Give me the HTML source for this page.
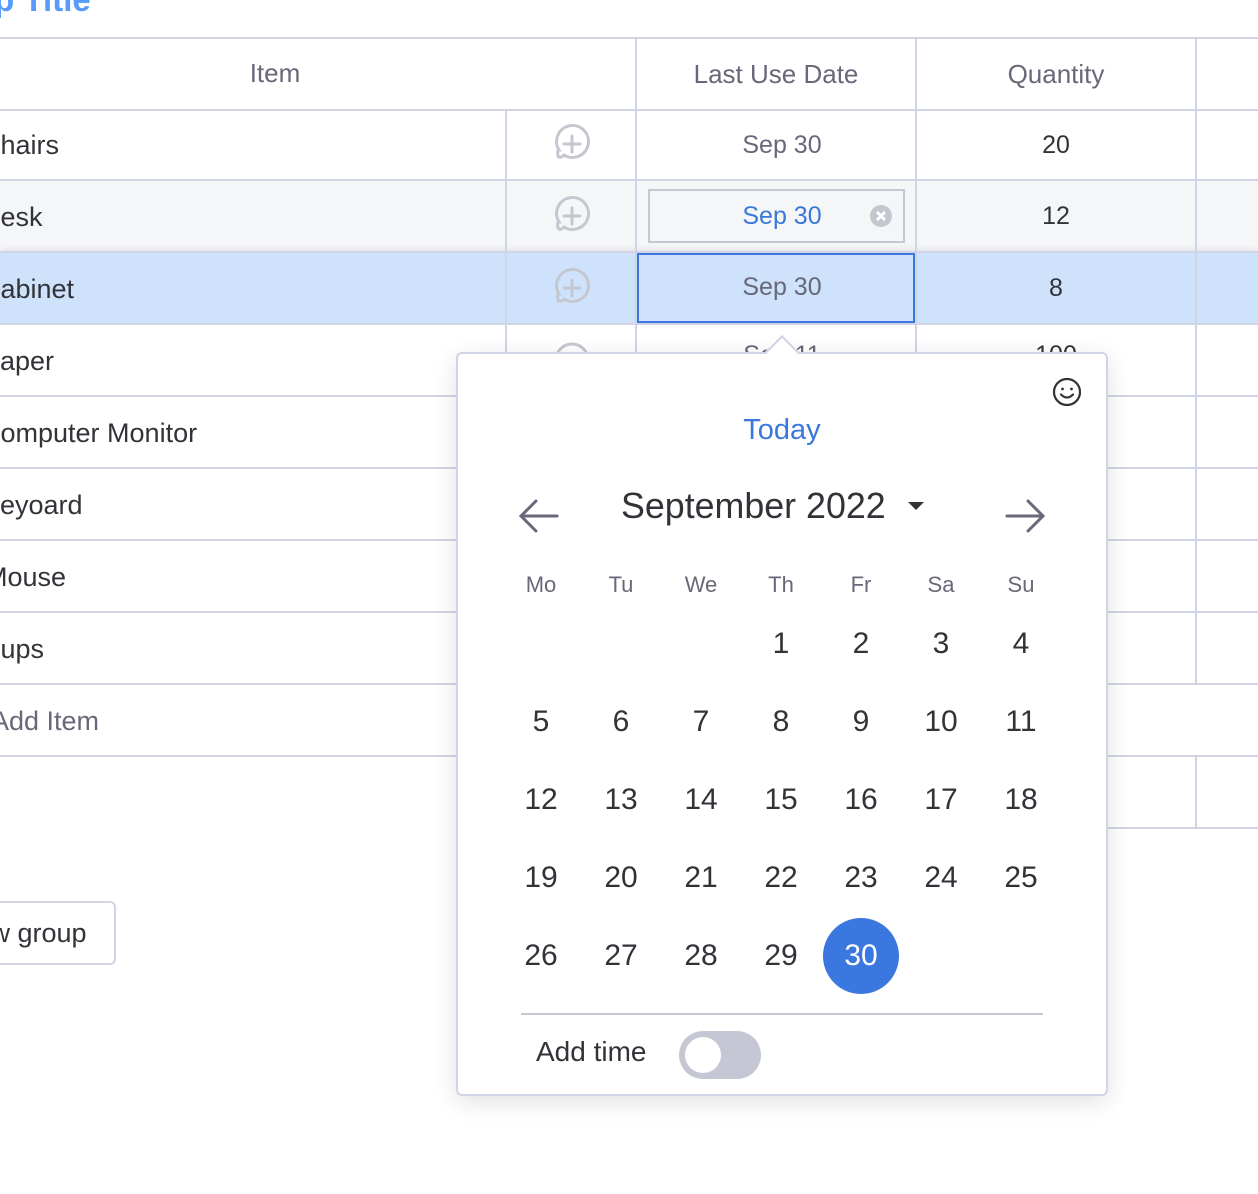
<!DOCTYPE html>
<html><head><meta charset="utf-8"><style>
*{margin:0;padding:0;box-sizing:border-box}
body{width:1258px;height:1194px;overflow:hidden;background:#fff;font-family:"Liberation Sans",sans-serif;position:relative;color:#323338}
.a{position:absolute}
.h{position:absolute;height:2px;background:#d0d4e4}
.v{position:absolute;width:2px;background:#d0d4e4}
.t{position:absolute;font-size:27px;line-height:30px;white-space:nowrap}
.c{position:absolute;text-align:center;font-size:25px;line-height:30px}
.d{position:absolute;width:60px;text-align:center;font-size:30px;font-weight:300;line-height:36px;color:#323338}
.w{position:absolute;width:60px;text-align:center;font-size:22px;line-height:26px;color:#676879}
</style></head><body>
<div class="a" style="left:-26px;top:-19px;font-size:33px;font-weight:bold;color:#579bfc">up Title</div>
<div class="a" style="left:0;top:181px;width:1258px;height:71px;background:#f5f6f8"></div>
<div class="a" style="left:0;top:252px;width:1258px;height:72px;background:#cfe2fb;box-shadow:0 -4px 6px rgba(0,0,0,0.06)"></div>
<div class="h" style="left:0;top:37px;width:1258px"></div>
<div class="h" style="left:0;top:109px;width:1258px"></div>
<div class="h" style="left:0;top:179px;width:1258px"></div>
<div class="h" style="left:0;top:251px;width:1258px"></div>
<div class="h" style="left:0;top:323px;width:1258px"></div>
<div class="h" style="left:0;top:395px;width:1258px"></div>
<div class="h" style="left:0;top:467px;width:1258px"></div>
<div class="h" style="left:0;top:539px;width:1258px"></div>
<div class="h" style="left:0;top:611px;width:1258px"></div>
<div class="h" style="left:0;top:683px;width:1258px"></div>
<div class="h" style="left:0;top:755px;width:1258px"></div>
<div class="h" style="left:1100px;top:827px;width:158px"></div>
<div class="v" style="left:505px;top:110px;height:574px"></div>
<div class="v" style="left:635px;top:38px;height:646px"></div>
<div class="v" style="left:915px;top:38px;height:646px"></div>
<div class="v" style="left:1195px;top:38px;height:646px"></div>
<div class="v" style="left:1195px;top:756px;height:72px"></div>
<div class="c" style="left:0;top:58px;width:550px;font-size:26px;color:#676879">Item</div>
<div class="c" style="left:636px;top:59px;width:280px;font-size:26px;color:#676879">Last Use Date</div>
<div class="c" style="left:916px;top:59px;width:280px;font-size:26px;color:#676879">Quantity</div>
<div class="t" style="left:-19px;top:130px">Chairs</div>
<div class="t" style="left:-19px;top:202px">Desk</div>
<div class="t" style="left:-19px;top:274px">Cabinet</div>
<div class="t" style="left:-18px;top:346px">Paper</div>
<div class="t" style="left:-19px;top:418px">Computer Monitor</div>
<div class="t" style="left:-18px;top:490px">Keyoard</div>
<div class="t" style="left:-15px;top:562px">Mouse</div>
<div class="t" style="left:-19px;top:634px">Cups</div>
<div class="t" style="left:-9px;top:706px;color:#676879">Add Item</div>
<svg class="a" style="left:550px;top:122px" width="44" height="290" viewBox="0 0 44 290" fill="none" stroke="#c5c7d0" stroke-width="3" stroke-linecap="round">
<g><path d="M8 34 Q7 28 9 28 A16 16 0 1 1 14 33 Q10 37 8 34Z"/><path d="M22 14v16M14 22h16"/></g>
<g transform="translate(0,72)"><path d="M8 34 Q7 28 9 28 A16 16 0 1 1 14 33 Q10 37 8 34Z"/><path d="M22 14v16M14 22h16"/></g>
<g transform="translate(0,144)"><path d="M8 34 Q7 28 9 28 A16 16 0 1 1 14 33 Q10 37 8 34Z"/><path d="M22 14v16M14 22h16"/></g>
<g transform="translate(0,216)"><circle cx="22" cy="22" r="16"/></g>
</svg>
<div class="c" style="left:642px;top:130px;width:280px;color:#676879">Sep 30</div>
<div class="a" style="left:648px;top:189px;width:257px;height:54px;border:2px solid #c5c7d4;background:#f5f6f8"></div>
<div class="c" style="left:642px;top:201px;width:280px;color:#3a78d8">Sep 30</div>
<svg class="a" style="left:869px;top:204px" width="24" height="24"><circle cx="12" cy="12" r="11" fill="#c5c7d0"/><path d="M8 8l8 8M16 8l-8 8" stroke="#fff" stroke-width="3"/></svg>
<div class="a" style="left:637px;top:253px;width:278px;height:70px;border:2px solid #3a78e0"></div>
<div class="c" style="left:642px;top:272px;width:280px;color:#676879">Sep 30</div>
<div class="c" style="left:916px;top:130px;width:280px;color:#323338">20</div>
<div class="c" style="left:916px;top:201px;width:280px;color:#323338">12</div>
<div class="c" style="left:916px;top:273px;width:280px;color:#323338">8</div>
<div class="c" style="left:642px;top:340px;width:280px;color:#676879">Sep 11</div>
<div class="c" style="left:916px;top:340px;width:280px;color:#323338">100</div>
<div class="a" style="left:-20px;top:901px;width:136px;height:64px;border:2px solid #d0d4e4;border-radius:6px;background:#fff"></div>
<div class="t" style="left:-44px;top:918px">New group</div>
<div class="a" style="left:456px;top:352px;width:652px;height:744px;background:#fff;border:2px solid #d0d4e4;border-radius:6px;box-shadow:0 6px 24px rgba(0,0,0,0.12)"></div>
<div class="a" style="left:770px;top:340px;width:24px;height:24px;background:#fff;border-left:2px solid #d0d4e4;border-top:2px solid #d0d4e4;transform:rotate(45deg)"></div>
<svg class="a" style="left:1052px;top:377px" width="30" height="30" fill="none" stroke="#323338" stroke-width="2.2"><circle cx="15" cy="15" r="13"/><circle cx="10.5" cy="12" r="1.4" fill="#323338" stroke="none"/><circle cx="19.5" cy="12" r="1.4" fill="#323338" stroke="none"/><path d="M9 17.5q6 6 12 0" stroke-linecap="round"/></svg>
<div class="a" style="left:456px;top:412px;width:652px;text-align:center;font-size:29px;line-height:36px;color:#3a78e0">Today</div>
<svg class="a" style="left:518px;top:497px" width="42" height="38" fill="none" stroke="#676879" stroke-width="3" stroke-linecap="round"><path d="M39 19H4M18 4L3 19l15 15"/></svg>
<svg class="a" style="left:1004px;top:497px" width="42" height="38" fill="none" stroke="#676879" stroke-width="3" stroke-linecap="round"><path d="M3 19h35M24 4l15 15-15 15"/></svg>
<div class="a" style="left:621px;top:485px;font-size:35.8px;line-height:42px;color:#323338;white-space:nowrap">September 2022</div>
<div class="a" style="left:908px;top:502px;width:0;height:0;border-left:8px solid transparent;border-right:8px solid transparent;border-top:8px solid #323338"></div>
<div class="w" style="left:511px;top:572px">Mo</div>
<div class="w" style="left:591px;top:572px">Tu</div>
<div class="w" style="left:671px;top:572px">We</div>
<div class="w" style="left:751px;top:572px">Th</div>
<div class="w" style="left:831px;top:572px">Fr</div>
<div class="w" style="left:911px;top:572px">Sa</div>
<div class="w" style="left:991px;top:572px">Su</div>
<div class="a" style="left:823px;top:918px;width:76px;height:76px;border-radius:50%;background:#3a78e0"></div>
<div class="d" style="left:751px;top:626px">1</div><div class="d" style="left:831px;top:626px">2</div><div class="d" style="left:911px;top:626px">3</div><div class="d" style="left:991px;top:626px">4</div>
<div class="d" style="left:511px;top:704px">5</div><div class="d" style="left:591px;top:704px">6</div><div class="d" style="left:671px;top:704px">7</div><div class="d" style="left:751px;top:704px">8</div><div class="d" style="left:831px;top:704px">9</div><div class="d" style="left:911px;top:704px">10</div><div class="d" style="left:991px;top:704px">11</div>
<div class="d" style="left:511px;top:782px">12</div><div class="d" style="left:591px;top:782px">13</div><div class="d" style="left:671px;top:782px">14</div><div class="d" style="left:751px;top:782px">15</div><div class="d" style="left:831px;top:782px">16</div><div class="d" style="left:911px;top:782px">17</div><div class="d" style="left:991px;top:782px">18</div>
<div class="d" style="left:511px;top:860px">19</div><div class="d" style="left:591px;top:860px">20</div><div class="d" style="left:671px;top:860px">21</div><div class="d" style="left:751px;top:860px">22</div><div class="d" style="left:831px;top:860px">23</div><div class="d" style="left:911px;top:860px">24</div><div class="d" style="left:991px;top:860px">25</div>
<div class="d" style="left:511px;top:938px">26</div><div class="d" style="left:591px;top:938px">27</div><div class="d" style="left:671px;top:938px">28</div><div class="d" style="left:751px;top:938px">29</div><div class="d" style="left:831px;top:938px;color:#fff">30</div>
<div class="a" style="left:521px;top:1013px;width:522px;height:2px;background:#c5c7d4"></div>
<div class="a" style="left:536px;top:1036px;font-size:28px;line-height:32px;color:#323338;white-space:nowrap">Add time</div>
<div class="a" style="left:679px;top:1031px;width:82px;height:48px;border-radius:24px;background:#c5c7d4"></div>
<div class="a" style="left:685px;top:1037px;width:36px;height:36px;border-radius:50%;background:#fff"></div>
</body></html>
